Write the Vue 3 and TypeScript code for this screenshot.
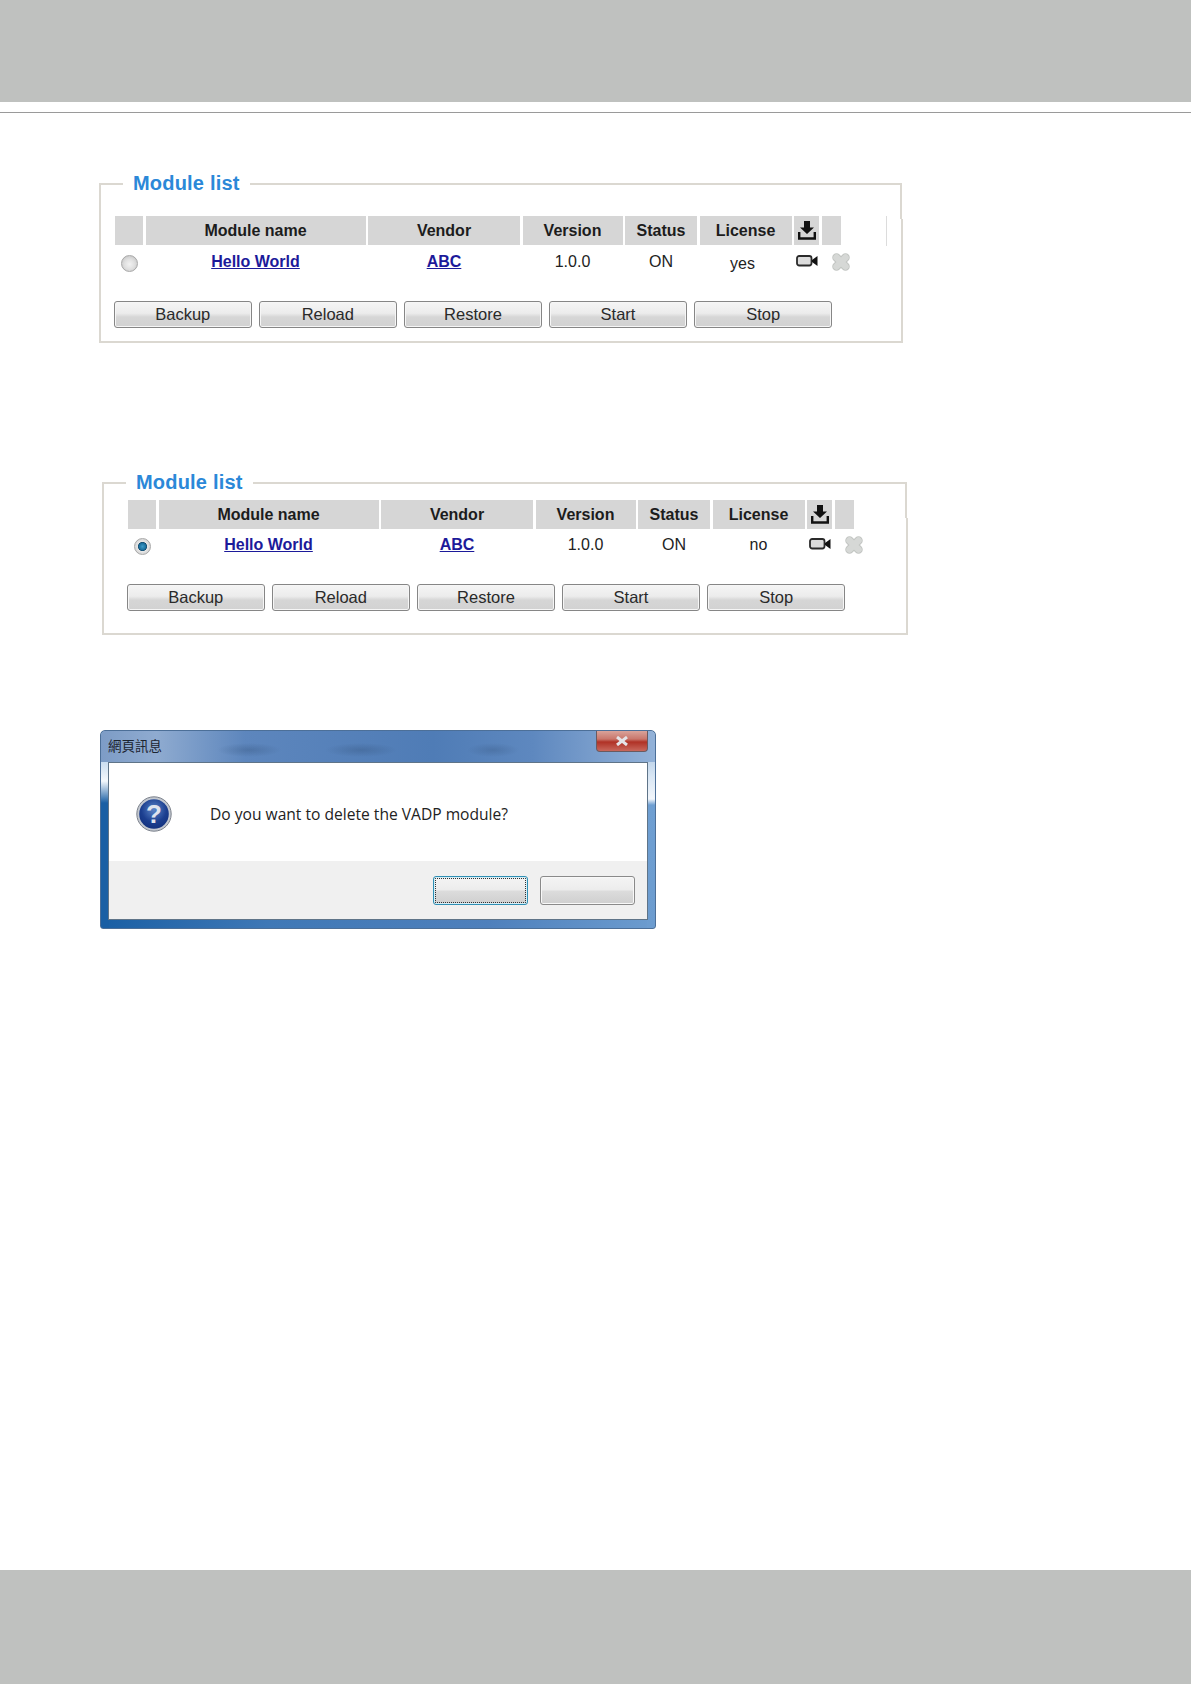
<script setup lang="ts">
interface Module {
  name: string;
  vendor: string;
  version: string;
  status: string;
  license: string;
}

interface Panel {
  id: string;
  selected: boolean;
  module: Module;
}

const headers = ['Module name', 'Vendor', 'Version', 'Status', 'License'];
const actions = ['Backup', 'Reload', 'Restore', 'Start', 'Stop'];

const panels: Panel[] = [
  {
    id: 'licensed',
    selected: false,
    module: { name: 'Hello World', vendor: 'ABC', version: '1.0.0', status: 'ON', license: 'yes' },
  },
  {
    id: 'unlicensed',
    selected: true,
    module: { name: 'Hello World', vendor: 'ABC', version: '1.0.0', status: 'ON', license: 'no' },
  },
];
</script>

<template>
  <div class="page">
    <div class="band header-band"></div>
    <div class="rule"></div>

    <fieldset v-for="panel in panels" :key="panel.id" class="panel" :class="panel.id">
      <legend>Module list</legend>
      <div class="module-grid">
        <div class="head"></div>
        <div v-for="h in headers" :key="h" class="head">{{ h }}</div>
        <div class="head icon-head">
          <svg width="18" height="19" viewBox="0 0 18 19">
            <path d="M6 0h6v6.5h4l-7 6.5-7-6.500h4z" fill="#111" />
            <path d="M1.200 11v6.500h15.600V11" fill="none" stroke="#111" stroke-width="2.400" />
          </svg>
        </div>
        <div class="head"></div>
        <div v-if="panel.id === 'licensed'" class="tail"></div>

        <div class="cell radio-cell">
          <span class="radio" :class="{ on: panel.selected }"></span>
        </div>
        <div class="cell"><a class="link">{{ panel.module.name }}</a></div>
        <div class="cell"><a class="link">{{ panel.module.vendor }}</a></div>
        <div class="cell">{{ panel.module.version }}</div>
        <div class="cell">{{ panel.module.status }}</div>
        <div class="cell" :class="{ low: panel.module.license === 'yes' }">{{ panel.module.license }}</div>
        <div class="cell cam-cell">
          <svg width="22" height="12" viewBox="0 0 22 12">
            <rect x="1" y="1" width="14.500" height="9.500" rx="2.200" fill="#dcdcdc" stroke="#2a2a2a" stroke-width="1.800" />
            <path d="M16 5l5.500-4v10L16 7z" fill="#111" />
          </svg>
        </div>
        <div class="cell del-cell">
          <svg width="18" height="18" viewBox="0 0 18 18">
            <path d="M4.500 4.500l9 9M13.500 4.500l-9 9" stroke="#c2c5c2" stroke-width="8.500" stroke-linecap="round" />
            <path d="M4.500 4.500l9 9M13.500 4.500l-9 9" stroke="#d6d8d6" stroke-width="6.500" stroke-linecap="round" />
          </svg>
        </div>
      </div>
      <div class="actions">
        <button v-for="a in actions" :key="a" type="button" class="action">{{ a }}</button>
      </div>
    </fieldset>

    <div class="dialog">
      <div class="titlebar">
        <span class="title">網頁訊息</span>
        <span class="close">
          <svg width="14" height="10" viewBox="0 0 14 10">
            <path d="M2 1l10 8M12 1L2 9" stroke="#e4e4e8" stroke-width="3" />
          </svg>
        </span>
      </div>
      <div class="dialog-inner">
        <div class="dialog-body">
          <svg class="question" width="36" height="36" viewBox="0 0 36 36">
            <defs>
              <radialGradient id="qfill" cx="50%" cy="35%" r="70%">
                <stop offset="0%" stop-color="#5c86c8" />
                <stop offset="60%" stop-color="#1c3f90" />
                <stop offset="100%" stop-color="#12307c" />
              </radialGradient>
            </defs>
            <circle cx="18" cy="18" r="17.200" fill="#c3c8d0" stroke="#7c828c" stroke-width="1" />
            <circle cx="18" cy="18" r="14.800" fill="url(#qfill)" />
            <text x="18" y="27" text-anchor="middle" class="qmark">?</text>
          </svg>
          <span class="message">Do you want to delete the VADP module?</span>
        </div>
        <div class="dialog-foot">
          <button type="button" class="win-btn focused"></button>
          <button type="button" class="win-btn"></button>
        </div>
      </div>
    </div>

    <div class="band footer-band"></div>
  </div>
</template>

<style>
html,
body {
  margin: 0;
  background: #fff;
}
</style>

<style scoped>
.page {
  min-height: 1684px;
  display: flex;
  flex-direction: column;
  font-family: "Liberation Sans", Arial, sans-serif;
  color: #222;
  box-sizing: border-box;
}

.band {
  background: #bfc1bf;
}

.header-band {
  height: 102px;
}

.footer-band {
  height: 114px;
  margin-top: auto;
}

.rule {
  height: 1px;
  margin-top: 10px;
  background: #9a9a9a;
}

.panel {
  position: relative;
  box-sizing: border-box;
  margin: 0;
  min-width: 0;
  border: 2px solid #dbd8d1;
}

/* the right edge of the frame steps over by a pixel near the top */
.panel::before,
.panel::after {
  content: "";
  position: absolute;
  top: -12px;
  width: 1px;
  height: 36px;
}

.panel::before {
  right: 0;
  background: #dbd8d1;
}

.panel::after {
  right: -2px;
  background: #fff;
}

.panel legend {
  padding: 0 10px;
  font-size: 20px;
  line-height: 23px;
  font-weight: 700;
  letter-spacing: 0.2px;
  color: #2b88d8;
}

.licensed {
  width: 804px;
  margin: 59px 0 0 99px;
  padding: 21px 0 13px 14px;
}

.licensed legend {
  margin-left: 8px;
}

.unlicensed {
  width: 806px;
  margin: 128px 0 0 102px;
  padding: 6px 0 22px 24px;
}

.unlicensed legend {
  margin-left: -2px;
}

.module-grid {
  display: grid;
  grid-template-columns: 28px 220px 152px 100px 72px 92px 25px 19px 44px;
  column-gap: 2.500px;
  font-size: 16px;
  line-height: 18px;
}

.head {
  height: 29px;
  display: flex;
  align-items: center;
  justify-content: center;
  background: #d6d6d6;
  font-weight: 700;
  color: #1c1c1c;
}

.icon-head svg {
  display: block;
}

.tail {
  height: 30px;
  border-right: 1px solid #dcdcdc;
}

.cell {
  height: 36px;
  box-sizing: border-box;
  padding-top: 7px;
  text-align: center;
}

.radio-cell {
  grid-column: 1;
  padding-top: 9px;
}

.low {
  padding: 9px 6px 0 0;
}

.link {
  color: #1c1a9a;
  font-weight: 700;
  text-decoration: underline;
}

.radio {
  display: block;
  width: 17px;
  height: 17px;
  box-sizing: border-box;
  margin: 0 auto;
  border-radius: 50%;
  border: 1px solid #a8a8a8;
  background: radial-gradient(circle at 50% 55%, #f2f2f2 0, #e0e0e0 45%, #bcbcbc 100%);
}

.radio.on {
  background: radial-gradient(circle, #3d9cc8 0, #1b6f9e 32%, #174e70 40%, #e6e6e6 46%, #c6c6c6 100%);
}

.cam-cell {
  padding-top: 9px;
}

.cam-cell svg,
.del-cell svg {
  display: block;
}

.cam-cell svg {
  margin: 0 auto;
}

.del-cell svg {
  margin-left: 10px;
}

.actions {
  display: flex;
  gap: 7.600px;
  margin: 19px 0 0 -1px;
}

.action {
  width: 137.500px;
  height: 27px;
  padding: 0;
  box-sizing: border-box;
  border: 1px solid #868686;
  border-radius: 3px;
  background: linear-gradient(180deg, #f5f5f5 0, #ececec 45%, #d6d6d6 60%, #d2d2d2 100%);
  box-shadow: inset 0 0 0 1px #f6f6f6;
  font-family: inherit;
  font-size: 16.500px;
  color: #2a2a2a;
}

.dialog {
  position: relative;
  width: 556px;
  height: 199px;
  box-sizing: border-box;
  margin: 95px 0 0 100px;
  padding: 0 7px 8px 7px;
  display: flex;
  flex-direction: column;
  border: 1px solid #4c6f98;
  border-radius: 5px 5px 3px 3px;
  background:
    linear-gradient(180deg, #7fa3cc 0, #c8dcf0 30px, #f4f8fc 50px, #1a5fa4 72px, #1a5fa4 100%) left / 8px 100% no-repeat,
    linear-gradient(180deg, #94b4d8 0, #d8e6f4 45px, #f2f6fb 68px, #6f9fd2 74px, #6c9ccf 100%) right / 8px 100% no-repeat,
    linear-gradient(90deg, #1a5fa4 0, #3f78b6 30%, #4e80bc 70%, #6c9ccf 100%);
}

.titlebar {
  height: 31px;
  margin: 0 -7px;
  padding: 0 7px 4px;
  box-sizing: border-box;
  display: flex;
  align-items: center;
  justify-content: space-between;
  border-radius: 5px 5px 0 0;
  background:
    radial-gradient(ellipse 32px 7px at 148px 19px, rgba(50, 80, 120, 0.35), transparent),
    radial-gradient(ellipse 36px 7px at 260px 19px, rgba(50, 80, 120, 0.35), transparent),
    radial-gradient(ellipse 26px 7px at 392px 19px, rgba(50, 80, 120, 0.3), transparent),
    linear-gradient(90deg, #7d9cc6 0, #8fabd0 10%, #5d86bd 26%, #4f7cb6 60%, #5e88bf 78%, #93b2d8 100%);
}

.title {
  font-family: "Noto Sans CJK TC", sans-serif;
  font-size: 13.500px;
  color: #1c2430;
}

.close {
  width: 52px;
  height: 21px;
  margin: -6px 0 0 0;
  display: flex;
  align-items: center;
  justify-content: center;
  box-sizing: border-box;
  border: 1px solid #6a5a60;
  border-top: 0;
  border-radius: 0 0 4px 4px;
  background: linear-gradient(180deg, #d9a39a 0, #c9776c 40%, #b03226 55%, #c8685c 100%);
}

.dialog-inner {
  flex: 1;
  display: flex;
  flex-direction: column;
  border: 1px solid #5f7488;
  background: #fff;
}

.dialog-body {
  height: 98px;
  box-sizing: border-box;
  padding: 31px 0 27px 27px;
  display: flex;
  align-items: center;
  gap: 38px;
}

.qmark {
  font-family: "Liberation Sans", sans-serif;
  font-size: 26px;
  font-weight: 700;
  fill: #dfe4ee;
}

.message {
  font-family: "Open Sans", sans-serif;
  font-size: 15.600px;
  color: #222;
}

.dialog-foot {
  flex: 1;
  display: flex;
  justify-content: flex-end;
  align-items: flex-start;
  gap: 12px;
  padding: 15px 12px 0 0;
  background: #f0f0f0;
}

.win-btn {
  width: 95px;
  height: 29px;
  padding: 0;
  box-sizing: border-box;
  border: 1px solid #8a8a8a;
  border-radius: 3px;
  background: linear-gradient(180deg, #f4f4f4 0, #ececec 48%, #dcdcdc 52%, #cfcfcf 100%);
  box-shadow: inset 0 0 0 1px #f8f8f8;
}

.win-btn.focused {
  border-color: #2f8fb4;
  box-shadow: inset 0 0 0 1px #d6eef6;
  outline: 1px dotted #333;
  outline-offset: -3px;
}
</style>
